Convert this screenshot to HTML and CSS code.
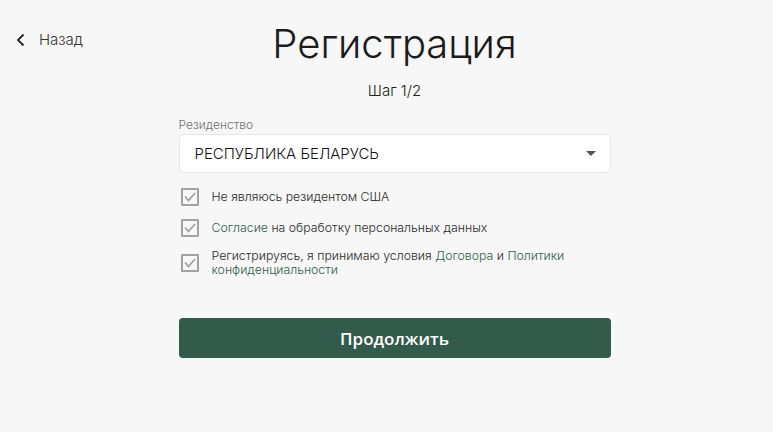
FILE: index.html
```html
<!DOCTYPE html>
<html lang="ru">
<head>
    <meta charset="UTF-8">
    <meta name="viewport" content="width=device-width, initial-scale=1.0">
    <title>Регистрация</title>
    <link rel="stylesheet" href="styles.css">
</head>
<body>
    <div class="page">
        <a class="back" href="#">
            <svg width="10" height="14" viewBox="0 0 10 14"><path d="M7.5 1.5 L2 7 L7.5 12.5" fill="none" stroke="#222" stroke-width="1.8"/></svg>
            <span>Назад</span>
        </a>
        <div class="container">
            <h1>Регистрация</h1>
            <p class="step">Шаг 1/2</p>

            <label class="field-label">Резиденство</label>
            <div class="select">
                <span>РЕСПУБЛИКА БЕЛАРУСЬ</span>
                <span class="arrow"></span>
            </div>

            <div class="checks">
                <div class="check">
                    <span class="box"><svg width="12" height="10" viewBox="0 0 12 10"><path d="M1 4.5 L4.5 8.5 L11 1" fill="none" stroke="#9b9da0" stroke-width="1.6"/></svg></span>
                    <span class="check-text">Не являюсь резидентом США</span>
                </div>
                <div class="check">
                    <span class="box"><svg width="12" height="10" viewBox="0 0 12 10"><path d="M1 4.5 L4.5 8.5 L11 1" fill="none" stroke="#9b9da0" stroke-width="1.6"/></svg></span>
                    <span class="check-text"><a href="#">Согласие</a> на обработку персональных данных</span>
                </div>
                <div class="check">
                    <span class="box"><svg width="12" height="10" viewBox="0 0 12 10"><path d="M1 4.5 L4.5 8.5 L11 1" fill="none" stroke="#9b9da0" stroke-width="1.6"/></svg></span>
                    <span class="check-text">Регистрируясь, я принимаю условия <a href="#">Договора</a> и <a href="#">Политики конфиденциальности</a></span>
                </div>
            </div>

            <button class="submit">Продолжить</button>
        </div>
    </div>
</body>
</html>
```

FILE: styles.css
```css
html, body {
    margin: 0;
    height: 100%;
}
body {
    background-color: #f6f7f6;
    font-family: Inter, "Noto Sans", sans-serif;
    color: #222;
}
.page {
    display: grid;
    grid-template-columns: 1fr 432px 1fr;
    padding-left: 16px;
}
.back {
    grid-column: 1;
    grid-row: 1;
    justify-self: start;
    align-self: start;
    margin-top: 30px;
    display: flex;
    align-items: center;
    gap: 13px;
    color: #333;
    font-size: 15px;
    font-weight: 300;
    text-decoration: none;
}
.back svg {
    display: block;
}
.container {
    grid-column: 2;
    grid-row: 1;
    display: flex;
    flex-direction: column;
}
h1 {
    margin: 19px 0 0;
    text-align: center;
    font-weight: 300;
    font-size: 40px;
    line-height: 50px;
    color: #1b1b1b;
}
.step {
    margin: 12px 0 0;
    text-align: center;
    font-size: 15px;
    font-weight: 300;
    line-height: 20px;
    color: #1e1e1e;
}
.field-label {
    margin-top: 17px;
    font-size: 12px;
    font-weight: 300;
    line-height: 14px;
    color: #6f7172;
}
.select {
    margin-top: 2px;
    height: 37px;
    background: #fff;
    border: 1px solid #e6e8e8;
    border-radius: 4px;
    display: flex;
    align-items: center;
    justify-content: space-between;
    padding: 0 14px 0 15px;
    font-size: 15px;
    font-weight: 300;
    color: #111;
}
.arrow {
    width: 0;
    height: 0;
    border-left: 5px solid transparent;
    border-right: 5px solid transparent;
    border-top: 5px solid #555;
}
.checks {
    margin-top: 14px;
    display: flex;
    flex-direction: column;
    gap: 11px;
}
.check {
    display: flex;
    align-items: center;
    gap: 13px;
    min-height: 20px;
}
.box {
    flex: none;
    margin-left: 2px;
    width: 14px;
    height: 14px;
    border: 2px solid #a0a2a5;
    border-radius: 1px;
    display: flex;
    align-items: center;
    justify-content: center;
}
.check-text {
    font-size: 12.3px;
    font-weight: 300;
    line-height: 14px;
    color: #2a2a2a;
}
.check-text a {
    color: #2f5f4c;
    text-decoration: none;
}
.submit {
    margin-top: 41px;
    height: 40px;
    border: none;
    border-radius: 4px;
    background-color: #335b4b;
    color: #fff;
    font-family: "Open Sans", sans-serif;
    font-weight: 600;
    font-size: 17px;
    cursor: pointer;
}
```
